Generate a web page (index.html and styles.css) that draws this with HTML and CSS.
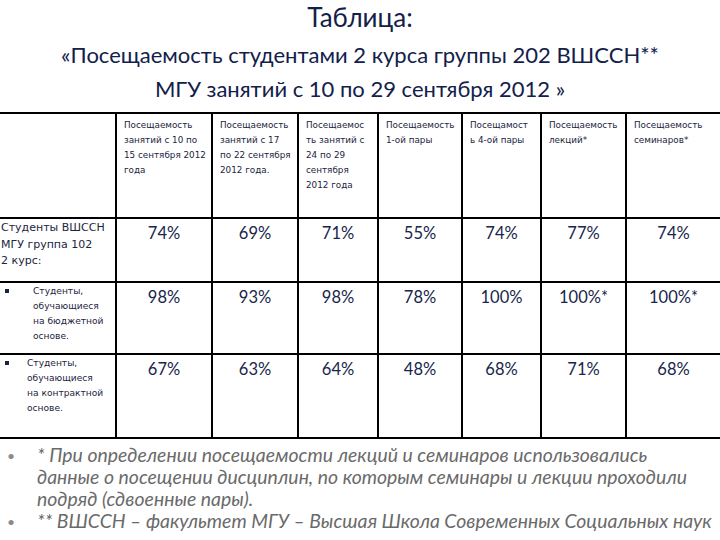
FILE: index.html
```html
<!DOCTYPE html>
<html lang="ru">
<head>
<meta charset="utf-8">
<link rel="stylesheet" href="styles.css">
</head>
<body>
<div class="page">
  <h1 class="title">Таблица:</h1>
  <p class="subtitle">«Посещаемость студентами 2 курса группы 202 ВШССН**</p>
  <p class="subtitle second">МГУ занятий с 10 по 29 сентября 2012 »</p>

  <table class="grid">
    <colgroup>
      <col class="c0"><col class="c1"><col class="c2"><col class="c3"><col class="c4"><col class="c5"><col class="c6"><col class="c7">
    </colgroup>
    <tr class="head">
      <td class="blank"></td>
      <td>Посещаемость<br>занятий с 10 по<br>15 сентября 2012<br>года</td>
      <td>Посещаемость<br>занятий с 17<br>по 22 сентября<br>2012 года.</td>
      <td>Посещаемос<br>ть занятий с<br>24 по 29<br>сентября<br>2012 года</td>
      <td>Посещаемость<br>1-ой пары</td>
      <td>Посещамост<br>ь 4-ой пары</td>
      <td>Посещаемость<br>лекций*</td>
      <td>Посещаемость<br>семинаров*</td>
    </tr>
    <tr class="r1">
      <td class="label">Студенты ВШССН<br>МГУ группа 102<br>2 курс:</td>
      <td class="v">74%</td><td class="v">69%</td><td class="v">71%</td><td class="v">55%</td><td class="v">74%</td><td class="v">77%</td><td class="v">74%</td>
    </tr>
    <tr class="r2">
      <td class="label sub"><span class="sq"></span><span class="lt">Студенты,<br>обучающиеся<br>на бюджетной<br>основе.</span></td>
      <td class="v">98%</td><td class="v">93%</td><td class="v">98%</td><td class="v">78%</td><td class="v">100%</td><td class="v">100%*</td><td class="v">100%*</td>
    </tr>
    <tr class="r3">
      <td class="label sub"><span class="sq"></span><span class="lt lt2">Студенты,<br>обучающиеся<br>на контрактной<br>основе.</span></td>
      <td class="v">67%</td><td class="v">63%</td><td class="v">64%</td><td class="v">48%</td><td class="v">68%</td><td class="v">71%</td><td class="v">68%</td>
    </tr>
  </table>

  <ul class="notes">
    <li>* При определении посещаемости лекций и семинаров использовались<br>данные о посещении дисциплин, по которым семинары и лекции проходили<br>подряд (сдвоенные пары).</li>
    <li>** ВШССН – факультет МГУ – Высшая Школа Современных Социальных наук</li>
  </ul>
</div>
</body>
</html>
```

FILE: styles.css
```css
html, body {
  margin: 0;
  padding: 0;
  background: #ffffff;
}
.page {
  width: 720px;
  height: 540px;
  overflow: hidden;
  color: #12204a;
  font-family: Lato, "Open Sans", sans-serif;
}
.title {
  margin: 0;
  padding-top: 2px;
  height: 36px;
  text-align: center;
  font-weight: normal;
  font-size: 26px;
  line-height: 30px;
}
.subtitle {
  margin: 0;
  text-align: center;
  font-size: 22px;
  line-height: 34px;
}
.second {
  height: 40px;
}
.grid {
  border-collapse: collapse;
  table-layout: fixed;
  width: 720px;
}
.c0 { width: 116px; }
.c1 { width: 96px; }
.c2 { width: 86px; }
.c3 { width: 80px; }
.c4 { width: 84px; }
.c5 { width: 79px; }
.c6 { width: 85px; }
.c7 { width: 94px; }
.grid td {
  border: 2px solid #000;
  vertical-align: top;
  padding: 0;
}
.grid tr td:first-child {
  border-left: none;
}
.grid tr td:last-child {
  border-right: none;
}
.head { height: 105px; }
.r1 { height: 64px; }
.r2 { height: 72px; }
.r3 { height: 84px; }
.head td {
  padding: 4px 0 0 7px;
  font-family: "DejaVu Sans", sans-serif;
  font-size: 8.8px;
  line-height: 15px;
  color: #1b2440;
  white-space: nowrap;
}
.v {
  text-align: center;
  font-size: 16.5px;
  line-height: 20px;
  padding-top: 4px !important;
  color: #17264d;
}
.label {
  font-family: "DejaVu Sans", sans-serif;
  color: #1b2440;
  white-space: nowrap;
}
.r1 .label {
  font-size: 11px;
  line-height: 16.5px;
  padding: 1px 0 0 1px;
}
.sub {
  font-size: 9.1px;
  line-height: 15px;
  padding-top: 1px !important;
}
.sub .sq {
  display: inline-block;
  width: 4px;
  height: 4px;
  background: #1b2440;
  vertical-align: top;
  margin: 5px 0 0 5px;
}
.lt {
  display: inline-block;
  margin-left: 24px;
}
.lt2 {
  margin-left: 18px;
}
.notes {
  margin: 5px 0 0 0;
  padding: 0 0 0 37px;
  list-style: none;
  font-family: Lato, "Open Sans", sans-serif;
  font-style: italic;
  font-size: 19.4px;
  line-height: 22px;
  color: #6a6a6a;
  white-space: nowrap;
}
.notes li {
  position: relative;
}
.notes li::before {
  content: "•";
  position: absolute;
  left: -30px;
  top: 1px;
  font-style: normal;
  font-size: 14px;
  color: #8a8a8a;
}
```
